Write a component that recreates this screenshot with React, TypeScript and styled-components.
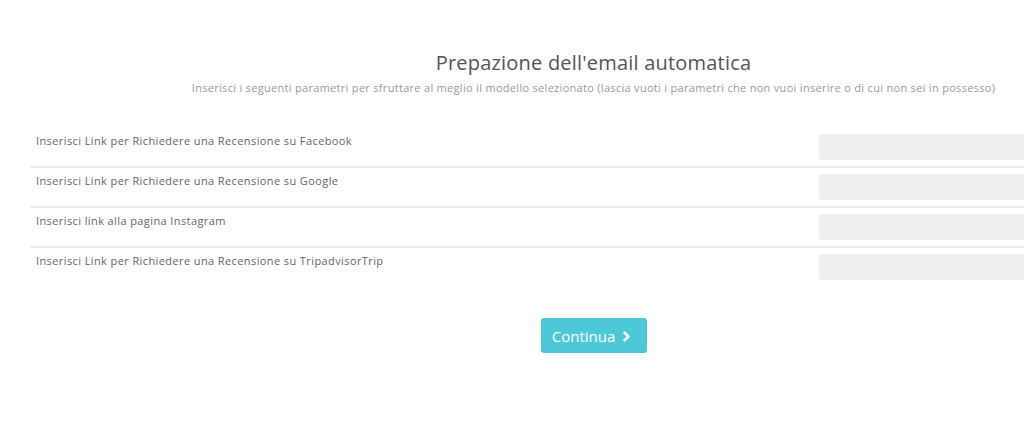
import React from 'react'
import styled, { createGlobalStyle } from 'styled-components'
import { FaAngleRight } from 'react-icons/fa'

const GlobalStyle = createGlobalStyle`
  html, body {
    margin: 0;
    padding: 0;
    background: #ffffff;
    overflow: hidden;
  }
  body {
    font-family: "Open Sans", "Liberation Sans", sans-serif;
  }
`

const fields = [
  'Inserisci Link per Richiedere una Recensione su Facebook',
  'Inserisci Link per Richiedere una Recensione su Google',
  'Inserisci link alla pagina Instagram',
  'Inserisci Link per Richiedere una Recensione su TripadvisorTrip',
]

const App: React.FC = () => {
  return (
    <>
      <GlobalStyle />
      <Viewport>
        <Page>
          <Header>
            <Title>Prepazione dell'email automatica</Title>
            <Subtitle>
              Inserisci i seguenti parametri per sfruttare al meglio il modello selezionato (lascia vuoti i parametri che non vuoi inserire o di cui non sei in possesso)
            </Subtitle>
          </Header>
          <Fields>
            {fields.map((label, i) => (
              <Row key={label} last={i === fields.length - 1}>
                <Label>{label}</Label>
                <Input type="text" />
              </Row>
            ))}
          </Fields>
          <Actions>
            <Button>
              Continua <FaAngleRight size={17} />
            </Button>
          </Actions>
        </Page>
      </Viewport>
    </>
  )
}

export default App

const Viewport = styled.div`
  width: 100%;
  height: 428px;
  overflow: hidden;
`
const Page = styled.div`
  width: 1127px;
  margin-left: 30px;
  padding-top: 51px;
  display: flex;
  flex-direction: column;
`
const Header = styled.div`
  display: flex;
  flex-direction: column;
  align-items: center;
  text-align: center;
`
const Title = styled.h2`
  margin: 0;
  font-size: 20px;
  font-weight: 400;
  color: #555555;
  line-height: 24px;
  letter-spacing: 0.2px;
`
const Subtitle = styled.p`
  margin: 5px 0 0;
  font-size: 11px;
  line-height: 16px;
  color: #9a9a9a;
  letter-spacing: 0.3px;
`
const Fields = styled.div`
  margin-top: 32px;
  display: flex;
  flex-direction: column;
`
const Row = styled.div<{ last?: boolean }>`
  height: 40px;
  box-sizing: border-box;
  display: flex;
  align-items: flex-start;
  justify-content: space-between;
  border-bottom: ${p => (p.last ? 'none' : '2px solid #ececec')};
`
const Label = styled.span`
  padding: 6px 0 0 6px;
  font-size: 11px;
  line-height: 14px;
  color: #666666;
  letter-spacing: 0.4px;
`
const Input = styled.input`
  margin: 6px 0 0;
  width: 338px;
  height: 26px;
  box-sizing: border-box;
  border: none;
  border-radius: 3px;
  background: #f0efee;
  outline: none;
`
const Actions = styled.div`
  margin-top: 30px;
  display: flex;
  justify-content: center;
`
const Button = styled.button`
  width: 106px;
  height: 35px;
  border: none;
  border-radius: 3px;
  background: #4cc8d8;
  color: #ffffff;
  font-family: "Open Sans", "Liberation Sans", sans-serif;
  font-size: 15px;
  display: flex;
  align-items: center;
  justify-content: center;
  gap: 3px;
  cursor: pointer;
  svg {
    margin-top: 1px;
  }
`
